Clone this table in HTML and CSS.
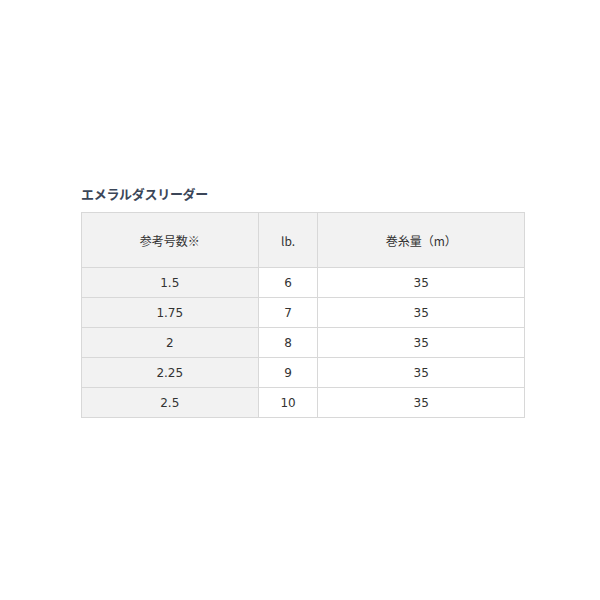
FILE: index.html
```html
<!DOCTYPE html>
<html lang="ja">
<head>
<meta charset="utf-8">
<link rel="stylesheet" href="styles.css">
</head>
<body>
<div class="page">
  <h2 class="title">エメラルダスリーダー</h2>
  <table class="spec">
    <colgroup>
      <col class="c1"><col class="c2"><col class="c3">
    </colgroup>
    <thead>
      <tr><th>参考号数※</th><th>lb.</th><th>巻糸量（m）</th></tr>
    </thead>
    <tbody>
      <tr><th>1.5</th><td>6</td><td>35</td></tr>
      <tr><th>1.75</th><td>7</td><td>35</td></tr>
      <tr><th>2</th><td>8</td><td>35</td></tr>
      <tr><th>2.25</th><td>9</td><td>35</td></tr>
      <tr><th>2.5</th><td>10</td><td>35</td></tr>
    </tbody>
  </table>
</div>
</body>
</html>
```
FILE: styles.css
```css
html, body {
  margin: 0;
  padding: 0;
  background: #fff;
}
.page {
  padding: 184px 0 0 81px;
  font-family: "DejaVu Sans", "Noto Sans CJK JP", sans-serif;
  color: #333;
}
.title {
  margin: 0 0 8px 0;
  font-size: 13px;
  line-height: 20px;
  font-weight: bold;
  color: #3b4658;
  font-family: "Noto Sans CJK JP", sans-serif;
  letter-spacing: -0.3px;
}
.spec {
  border-collapse: collapse;
  width: 444px;
  font-size: 12px;
}
.c1 { width: 177px; }
.c2 { width: 60px; }
.c3 { width: 207px; }
.spec th, .spec td {
  border: 1px solid #d8d8d8;
  text-align: center;
  font-weight: normal;
  padding: 0;
  height: 29px;
}
.spec thead th {
  background: #f2f2f2;
  height: 54px;
  font-family: "Noto Sans CJK JP", sans-serif;
  font-size: 12px;
}
.spec tbody th {
  background: #f2f2f2;
}
.spec td {
  background: #fff;
}
```
